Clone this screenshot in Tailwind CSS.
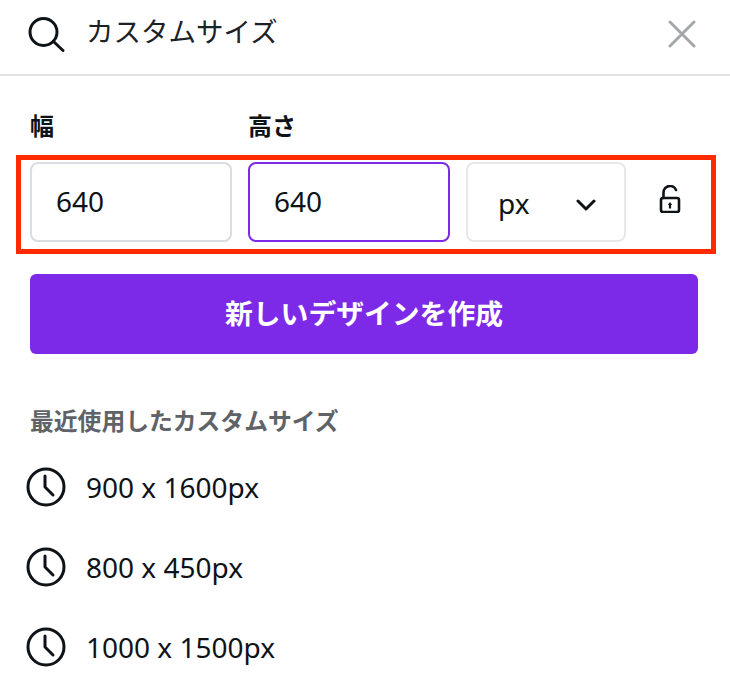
<!doctype html>
<html lang="ja">
<head>
<meta charset="utf-8">
<script src="https://cdn.jsdelivr.net/npm/@tailwindcss/browser@4"></script>
</head>
<body class="bg-white">
<div class="relative w-[730px] h-[676px] overflow-hidden bg-white text-[#0e1318] font-['Noto_Sans','Noto_Sans_CJK_JP',sans-serif]">
  <!-- search bar -->
  <div class="flex items-center h-[76px] border-b-2 border-[#e1e3e6] pl-[28px] pr-[34px]">
    <svg class="w-[38px] h-[38px] shrink-0 mt-[-4px]" viewBox="0 0 38 38" fill="none" stroke="#0e1318" stroke-width="3" stroke-linecap="round"><circle cx="15.5" cy="16" r="13.5"/><path d="M25.5 25.5 L35 34.5"/></svg>
    <span class="ml-[20px] flex-1 text-[27.5px] leading-[38px] mt-[-10px] text-[#1c2126]">カスタムサイズ</span>
    <svg class="w-[28px] h-[28px] shrink-0 mt-[-6px]" viewBox="0 0 28 28" fill="none" stroke="#a5a8ab" stroke-width="3" stroke-linecap="round"><path d="M2 2 L26 26 M26 2 L2 26"/></svg>
  </div>

  <div class="px-[30px]">
    <!-- size labels -->
    <div class="flex gap-[16px] mt-[36px] h-[28px] items-center text-[24px] font-bold">
      <span class="w-[202px]">幅</span>
      <span class="w-[202px]">高さ</span>
    </div>
    <!-- size fields -->
    <div class="flex gap-[16px] mt-[22px] h-[80px] text-[28px] leading-[38px]">
      <div class="w-[202px] flex items-center pl-[24px] pb-[2px] border-2 border-[#d9dce0] rounded-[8px]">640</div>
      <div class="w-[202px] flex items-center pl-[24px] pb-[2px] border-2 border-[#7d2ae8] rounded-[8px]">640</div>
      <div class="w-[160px] flex items-center pl-[30px] border-2 border-[#e6e8ea] rounded-[8px]">
        <span class="mt-[1px]">px</span>
        <svg class="w-[20px] h-[12px] ml-[47px] mt-[5px]" viewBox="0 0 20 12" fill="none" stroke="#0e1318" stroke-width="3" stroke-linecap="round" stroke-linejoin="round"><path d="M2 2 L10 10 L18 2"/></svg>
      </div>
      <div class="flex-1 flex items-center justify-center pb-[6px] pr-[2px]">
        <svg class="w-[22px] h-[28px]" viewBox="0 0 22 28" fill="none" stroke="#0e1318" stroke-width="2.6" stroke-linecap="round"><path d="M4.5 13 V7.5 a6.5 6.5 0 0 1 12.5 -2.5"/><rect x="2" y="13" width="18" height="14" rx="2"/><path d="M11 17 L13.2 20 H8.8 Z" fill="#0e1318" stroke="none"/><path d="M11 19 V23.5" stroke-width="2.2" stroke-linecap="butt"/></svg>
      </div>
    </div>
    <!-- primary button -->
    <button class="block w-[668px] h-[80px] mt-[32px] bg-[#7d2ae8] rounded-[6px] text-white text-[27.8px] font-bold">新しいデザインを作成</button>
    <!-- recent sizes -->
    <h2 class="mt-[51px] h-[32px] leading-[32px] text-[23.8px] font-bold text-[#5f6368]">最近使用したカスタムサイズ</h2>
    <div class="mt-[10px] -ml-[4px] flex flex-col text-[28px]">
      <div class="flex items-center h-[80px]">
        <svg class="w-[40px] h-[40px] shrink-0" viewBox="0 0 40 40" fill="none" stroke="#0e1318" stroke-width="3" stroke-linecap="round" stroke-linejoin="round"><circle cx="20" cy="20" r="18"/><path d="M19 9 V20 L27 28"/></svg>
        <span class="ml-[20px]">900 x 1600px</span>
      </div>
      <div class="flex items-center h-[80px]">
        <svg class="w-[40px] h-[40px] shrink-0" viewBox="0 0 40 40" fill="none" stroke="#0e1318" stroke-width="3" stroke-linecap="round" stroke-linejoin="round"><circle cx="20" cy="20" r="18"/><path d="M19 9 V20 L27 28"/></svg>
        <span class="ml-[20px]">800 x 450px</span>
      </div>
      <div class="flex items-center h-[80px]">
        <svg class="w-[40px] h-[40px] shrink-0" viewBox="0 0 40 40" fill="none" stroke="#0e1318" stroke-width="3" stroke-linecap="round" stroke-linejoin="round"><circle cx="20" cy="20" r="18"/><path d="M19 9 V20 L27 28"/></svg>
        <span class="ml-[20px]">1000 x 1500px</span>
      </div>
    </div>
  </div>

  <!-- red annotation box over the fields -->
  <div class="absolute left-[16px] top-[155px] w-[700px] h-[99px] border-[5px] border-[#ff2a00]"></div>
</div>
</body>
</html>
